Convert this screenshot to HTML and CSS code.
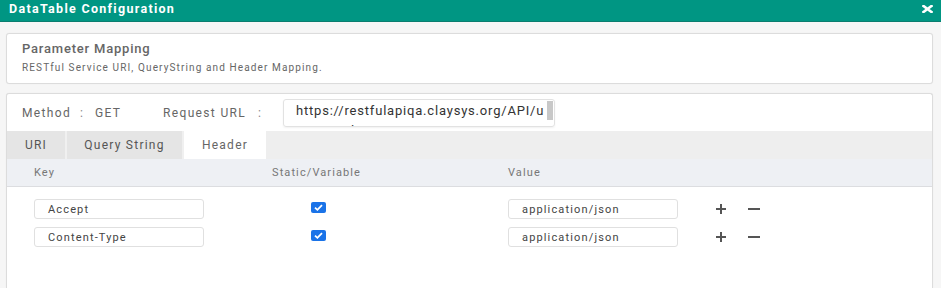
FILE: index.html
```html
<!DOCTYPE html>
<html>
<head>
<meta charset="utf-8">
<link rel="stylesheet" href="styles.css">
</head>
<body>
<div class="titlebar">
  <span class="title">DataTable Configuration</span>
  <svg class="close" width="11" height="8" viewBox="0 0 11 8"><path d="M1.5 1 L9.5 7 M9.5 1 L1.5 7" stroke="#fff" stroke-width="2.6" stroke-linecap="square"/></svg>
</div>
<div class="content">
  <div class="card intro">
    <div class="intro-title">Parameter Mapping</div>
    <div class="intro-sub">RESTful Service URI, QueryString and Header Mapping.</div>
  </div>
  <div class="card main">
    <div class="method-row">
      <span class="lbl w-method">Method</span><span class="colon w-c1">:</span><span class="lbl w-get">GET</span>
      <span class="lbl w-req">Request URL</span><span class="colon w-c2">:</span>
      <div class="url-box">
        <div class="url-text">https://restfulapiqa.claysys.org/API/u<br>ser/userlist</div>
        <div class="scroll"></div>
      </div>
    </div>
    <div class="tabs">
      <div class="tab t-uri">URI</div>
      <div class="tab t-qs">Query String</div>
      <div class="tab active">Header</div>
    </div>
    <div class="thead">
      <div class="c-key">Key</div>
      <div class="c-sv">Static/Variable</div>
      <div class="c-val">Value</div>
    </div>
    <div class="rows">
      <div class="row">
        <div class="c-key"><div class="inp">Accept</div></div>
        <div class="c-sv"><span class="chk"><svg width="9" height="7" viewBox="0 0 9 7"><path d="M1 3.6 L3.4 5.8 L8 1.2" fill="none" stroke="#fff" stroke-width="1.8"/></svg></span></div>
        <div class="c-val"><div class="inp">application/json</div></div>
        <div class="acts"><span class="plus"></span><span class="minus"></span></div>
      </div>
      <div class="row">
        <div class="c-key"><div class="inp">Content-Type</div></div>
        <div class="c-sv"><span class="chk"><svg width="9" height="7" viewBox="0 0 9 7"><path d="M1 3.6 L3.4 5.8 L8 1.2" fill="none" stroke="#fff" stroke-width="1.8"/></svg></span></div>
        <div class="c-val"><div class="inp">application/json</div></div>
        <div class="acts"><span class="plus"></span><span class="minus"></span></div>
      </div>
    </div>
  </div>
</div>
</body>
</html>
```
FILE: styles.css
```css
* { box-sizing: border-box; }
html, body { margin: 0; height: 100%; overflow: hidden; }
body {
  background: #f6f6f6;
  font-family: Roboto, "Liberation Sans", sans-serif;
  color: #666;
}
.titlebar {
  height: 22px;
  background: #009683;
  border-bottom: 1px solid #0b7d6f;
  display: flex;
  align-items: center;
  justify-content: space-between;
  padding: 0 8px 4px 9px;
}
.title {
  color: #fff;
  font-weight: 700;
  font-size: 12.5px;
  letter-spacing: 1.3px;
}
.content {
  padding: 11px 8px 0 6px;
}
.card {
  background: #fff;
  border: 1px solid #dcdcdc;
  border-radius: 3px;
  box-shadow: 0 0 1px rgba(0,0,0,0.08);
}
.intro {
  height: 51px;
  padding: 7px 0 0 15px;
}
.intro-title {
  font-size: 13px;
  font-weight: 500;
  color: #666;
  letter-spacing: 0.8px;
}
.intro-sub {
  margin-top: 6px;
  font-size: 10px;
  color: #666;
  letter-spacing: 1.12px;
}
.main {
  margin-top: 9px;
  height: 195px;
  border-bottom: none;
  border-radius: 3px 3px 0 0;
}
.method-row {
  height: 37px;
  display: flex;
  align-items: center;
  padding-left: 15px;
  font-size: 12px;
  letter-spacing: 1.35px;
}
.lbl { color: #666; white-space: nowrap; }
.colon { color: #888; }
.w-method { width: 58px; }
.w-c1 { width: 15px; }
.w-get { width: 68px; }
.w-req { width: 95px; }
.w-c2 { width: 25px; }
.url-box {
  position: relative;
  width: 272px;
  height: 28px;
  border: 1px solid #e2e2e2;
  border-radius: 3px;
  box-shadow: 0 1px 2px rgba(0,0,0,0.06);
  overflow: hidden;
  padding: 1px 0 0 12px;
  margin-top: 1px;
}
.url-text {
  font-size: 13px;
  line-height: 20px;
  color: #333;
  letter-spacing: 0.8px;
  white-space: nowrap;
}
.scroll {
  position: absolute;
  right: 1px;
  top: 1px;
  width: 6px;
  height: 19px;
  background: #c8c8c8;
}
.tabs {
  height: 28px;
  background: #eeeeee;
  display: flex;
  font-size: 12px;
  letter-spacing: 1.25px;
}
.tab {
  display: flex;
  align-items: center;
  justify-content: center;
  color: #555;
  background: #e5e5e5;
  border-right: 2px solid #f0f0f0;
}
.t-uri { width: 60px; }
.t-qs { width: 117px; }
.tab.active {
  width: 82px;
  background: #fff;
  color: #666;
  border-right: none;
}
.thead {
  height: 28px;
  background: #eef0f4;
  border-bottom: 1px solid #dcdde0;
  display: flex;
  align-items: center;
  padding-left: 27px;
  font-size: 11px;
  color: #777;
  letter-spacing: 1.1px;
}
.c-key { width: 238px; }
.c-sv { width: 236px; }
.c-val { width: 208px; }
.rows { padding: 8px 0 0 27px; }
.row {
  display: flex;
  align-items: center;
  height: 28px;
}
.inp {
  width: 170px;
  height: 20px;
  border: 1px solid #e0e0e0;
  border-radius: 3px;
  font-size: 11px;
  color: #444;
  letter-spacing: 1.15px;
  padding: 3px 0 0 13px;
  white-space: nowrap;
}
.chk {
  display: inline-flex;
  align-items: center;
  justify-content: center;
  width: 15px;
  height: 11px;
  margin-left: 39px;
  background: #1a73e8;
  border-radius: 2px;
  vertical-align: middle;
  position: relative;
  top: -3px;
}
.acts {
  display: flex;
  align-items: center;
  gap: 22px;
}
.plus, .minus {
  position: relative;
  display: inline-block;
  width: 10px;
  height: 10px;
}
.plus::before, .minus::before {
  content: "";
  position: absolute;
  left: 0; top: 4px;
  width: 10px; height: 2px;
  background: #555;
}
.minus::before { width: 12px; }
.plus::after {
  content: "";
  position: absolute;
  left: 4px; top: 0;
  width: 2px; height: 10px;
  background: #555;
}
```
